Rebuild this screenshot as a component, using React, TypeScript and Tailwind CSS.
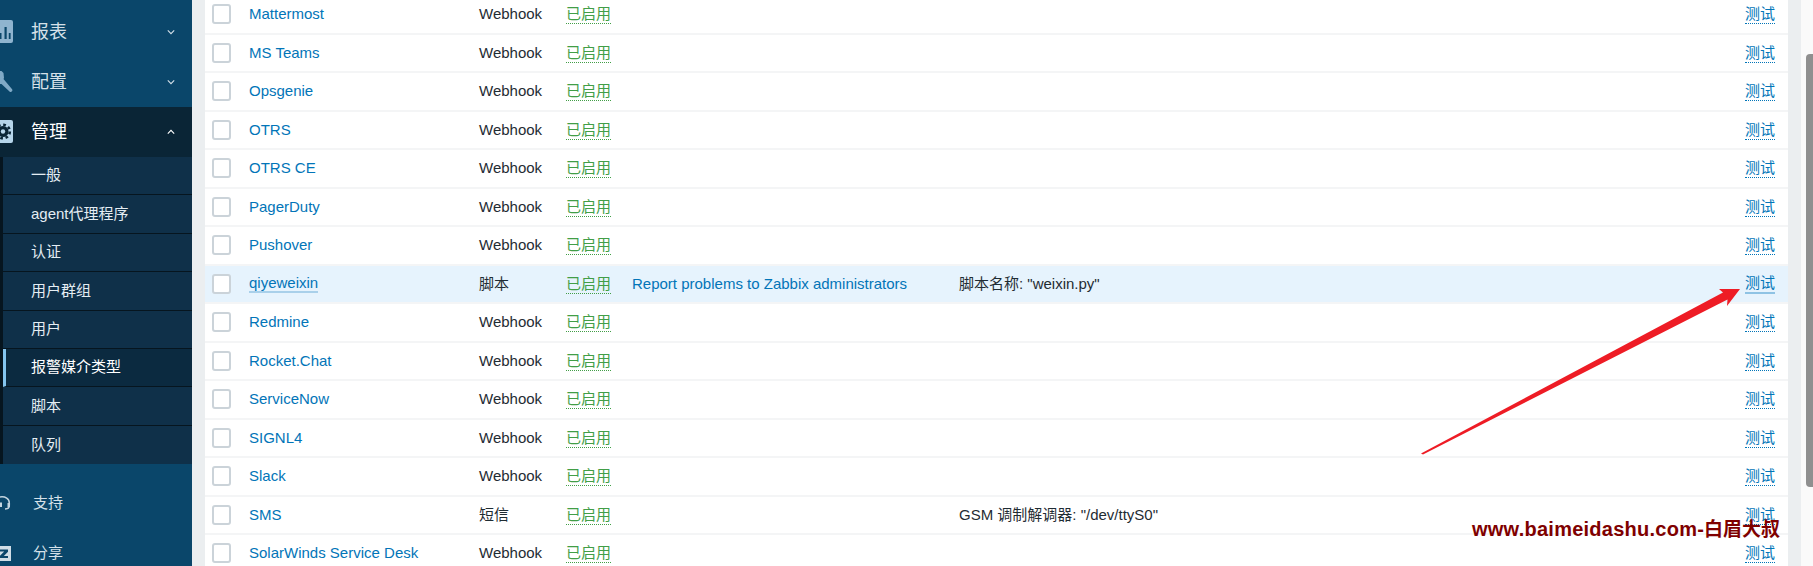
const rows: [string, string, string, string][] = [
  ["Mattermost", "Webhook", "", ""],
  ["MS Teams", "Webhook", "", ""],
  ["Opsgenie", "Webhook", "", ""],
  ["OTRS", "Webhook", "", ""],
  ["OTRS CE", "Webhook", "", ""],
  ["PagerDuty", "Webhook", "", ""],
  ["Pushover", "Webhook", "", ""],
  ["qiyeweixin", "脚本", "Report problems to Zabbix administrators", '脚本名称: "weixin.py"'],
  ["Redmine", "Webhook", "", ""],
  ["Rocket.Chat", "Webhook", "", ""],
  ["ServiceNow", "Webhook", "", ""],
  ["SIGNL4", "Webhook", "", ""],
  ["Slack", "Webhook", "", ""],
  ["SMS", "短信", "", 'GSM 调制解调器: "/dev/ttyS0"'],
  ["SolarWinds Service Desk", "Webhook", "", ""],
];

const sub = ["一般", "agent代理程序", "认证", "用户群组", "用户", "报警媒介类型", "脚本", "队列"];

function Chevron({ up }: { up?: boolean }) {
  return (
    <svg width="8" height="6" viewBox="0 0 8 6" fill="none" stroke="currentColor" strokeWidth="1.1">
      <path d={up ? "M.8 4.6 4 1.4l3.2 3.2" : "M.8 1.4 4 4.6l3.2-3.2"} />
    </svg>
  );
}

function MenuRow({ label, icon, up, active }: { label: string; icon: React.ReactNode; up?: boolean; active?: boolean }) {
  return (
    <div className={`flex h-[50px] items-center pr-[17px] ${active ? "bg-[#0a2536] text-white" : "text-[#d5e1e9]"}`}>
      <div className="w-[31px] shrink-0">{icon}</div>
      <span className="flex-1 text-[18px]">{label}</span>
      <Chevron up={up} />
    </div>
  );
}

export default function App() {
  return (
    <div className="relative flex h-[566px] w-[1813px] overflow-hidden bg-[#ebeef0] font-['Liberation_Sans','Noto_Sans_CJK_SC',sans-serif] text-[15px] text-[#1f2c33]">
      <aside className="w-[192px] shrink-0 bg-[#0a466a] pt-[7px]">
        <MenuRow
          label="报表"
          icon={
            <svg width="14" height="24" viewBox="0 0 14 24" className="text-[#8fb4cf]">
              <path fill="currentColor" d="M0 0h11a2 2 0 0 1 2 2v19a2 2 0 0 1-2 2H0z" />
              <path fill="#0a466a" d="M0 13h1.500v6H0zM4.500 7h2.200v12H4.500zM8.800 13h1.800v6H8.800z" />
            </svg>
          }
        />
        <MenuRow
          label="配置"
          icon={
            <svg width="14" height="24" viewBox="0 0 14 24" className="text-[#7fa9c6]">
              <path fill="currentColor" d="M0 1h1.500L3.500 3l.5 5-.5 1 8.600 10.200a1.500 1.500 0 0 1-.1 2l-.4.400a1.500 1.500 0 0 1-2.100 0L1.500 14 0 14z" />
            </svg>
          }
        />
        <MenuRow
          active
          up
          label="管理"
          icon={
            <svg width="14" height="24" viewBox="0 0 14 24" className="text-[#b6d5ea]">
              <path fill="currentColor" d="M0 0h11a2 2 0 0 1 2 2v19a2 2 0 0 1-2 2H0z" />
              <circle cx="3" cy="11.500" r="5.500" fill="#0a2536" />
              <circle cx="3" cy="11.500" r="6.800" fill="none" stroke="#0a2536" strokeWidth="2.600" strokeDasharray="2.700 2.640" />
              <circle cx="3" cy="11.500" r="2.200" fill="#b6d5ea" />
            </svg>
          }
        />
        <ul className="h-[307px] border-l-[3px] border-[#06151f] bg-[#0f3049] text-[15px] text-[#e4edf3]">
          {sub.map((s, i) => (
            <li
              key={s}
              className={`flex h-[38.4px] items-center ${i === 7 ? "" : "border-b border-[#06151f]"} ${
                i === 5 ? "border-l-[3px] border-l-[#84c5ef] bg-[#0b2a40] pl-[25px] text-white" : "pl-[28px]"
              }`}
            >
              {s}
            </li>
          ))}
        </ul>
        <div className="mt-[14px] text-[15px] text-[#d5e1e9]">
          <div className="flex h-[50px] items-center">
            <div className="w-[33px] shrink-0">
              <svg width="11" height="15" viewBox="0 0 11 15" fill="none" stroke="#c4d5e0" strokeWidth="1.500">
                <path d="M0 1c5.500-.8 9.300 1.800 9.300 6v2.500c0 2.300-1.800 3.500-4.300 3.500" />
                <path d="M7.500 7h2.500v4H7.500zM0 6.500h2v4.500H0z" fill="#c4d5e0" stroke="none" />
              </svg>
            </div>
            <span>支持</span>
          </div>
          <div className="flex h-[50px] items-center">
            <div className="w-[33px] shrink-0">
              <svg width="11" height="15" viewBox="0 0 11 15">
                <path fill="#d0dde6" d="M0 0h11v15H0z" />
                <path fill="#0a466a" d="M0 3.500h8v2.300L3.800 10H8v2H0V9.800L4.200 5.600H0z" />
              </svg>
            </div>
            <span>分享</span>
          </div>
        </div>
      </aside>

      <main className="ml-[13px] mr-[13px] w-[1583px] -mt-[4px] self-start bg-white">
        {rows.map(([name, type, action, info]) => {
          const hover = name === "qiyeweixin";
          return (
            <div
              key={name}
              className={`grid h-[38.5px] grid-cols-[44px_230px_87px_66px_327px_1fr_auto] items-center border-b-2 border-[#f4f5f6] pr-[13px] ${
                hover ? "bg-[#e6f3fd]" : ""
              }`}
            >
              <span className="ml-[7px] h-[20px] w-[19px] rounded-[3px] border-2 border-[#cbd3d9] bg-white" />
              <a className={`w-fit text-[#0275b8] ${hover ? "border-b-2 border-[#a9d0ea] leading-[17px]" : ""}`}>{name}</a>
              <span>{type}</span>
              <span className="w-fit border-b border-dotted border-[#429e47] leading-[19px] text-[#429e47]">已启用</span>
              <a className="whitespace-nowrap text-[#0275b8]">{action}</a>
              <span>{info}</span>
              <a
                className={`leading-[19px] text-[#0275b8] ${
                  hover ? "border-b-2 border-[#8fc3e4]" : "border-b border-dotted border-[#0275b8]"
                }`}
              >
                测试
              </a>
            </div>
          );
        })}
      </main>

      <div className="w-[12px] shrink-0 bg-[#fafafa]">
        <div className="ml-[5px] mt-[54px] h-[433px] w-[7px] rounded-l-[4px] bg-[#8f8f8f]" />
      </div>

      <svg className="absolute left-0 top-0" width="1813" height="566" viewBox="0 0 1813 566">
        <path fill="#ee1c25" d="M1421 453.500 1723 292.500 1719 289 1740 289 1727 306 1727.500 299.500 1423 454.500z" />
      </svg>

      <div className="absolute left-[1472px] top-[515px] whitespace-nowrap text-[20px] font-bold leading-[28px] tracking-[0.25px] text-[#7f0000]">
        www.baimeidashu.com-<span className="text-[19px] tracking-normal">白眉大叔</span>
      </div>
    </div>
  );
}
